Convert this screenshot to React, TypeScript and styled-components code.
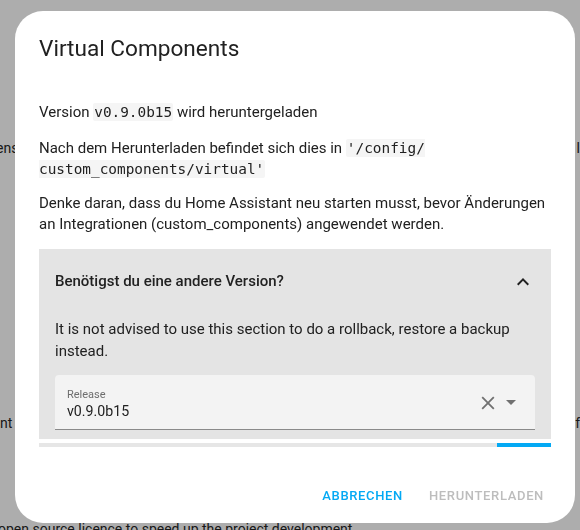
import React from "react";
import styled, { createGlobalStyle } from "styled-components";

const Global = createGlobalStyle`
  html, body { margin: 0; padding: 0; }
  body {
    width: 580px;
    height: 530px;
    overflow: hidden;
    background: #ffffff;
    font-family: Roboto, "Liberation Sans", sans-serif;
  }
`;

const Page = styled.div`
  width: 580px;
  height: 530px;
  overflow: hidden;
  color: #262626;
  font-size: 14px;
  line-height: 16px;
  display: flex;
  flex-direction: column;
`;

const BgRow = styled.div<{ $top: number; $shift?: number }>`
  display: flex;
  justify-content: space-between;
  margin-top: ${(p) => p.$top}px;
  margin-left: ${(p) => p.$shift ?? 0}px;
  white-space: nowrap;
`;

const BgLine = styled.div<{ $top: number }>`
  margin-top: ${(p) => p.$top}px;
  margin-left: -2px;
  white-space: nowrap;
`;

const Scrim = styled.div`
  position: fixed;
  inset: 0;
  background: rgba(0, 0, 0, 0.32);
  display: flex;
  align-items: flex-start;
  justify-content: flex-start;
  padding: 11px 0 0 15px;
`;

const Dialog = styled.div`
  width: 560px;
  height: 512px;
  background: #ffffff;
  border-radius: 28px;
  display: flex;
  flex-direction: column;
  overflow: hidden;
  color: #212121;
`;

const Title = styled.h2`
  margin: 0;
  padding: 24px 24px 0;
  height: 51px;
  box-sizing: border-box;
  font-size: 22.6px;
  line-height: 28px;
  font-weight: 400;
  color: #212121;
`;

const Content = styled.div`
  flex: 1;
  min-height: 0;
  overflow: hidden;
  padding: 40px 24px 0;
  font-size: 15px;
  line-height: 21px;
`;

const Para = styled.p`
  margin: 0 0 13px;
  &:first-child {
    margin-bottom: 15px;
  }
`;

const Code = styled.code`
  font-family: "DejaVu Sans Mono", "Liberation Mono", monospace;
  font-size: 14.4px;
  line-height: 20px;
  background: #f5f5f5;
  padding: 1px 1px;
  border-radius: 2px;
  color: #212121;
`;

const Panel = styled.div`
  margin-top: 14px;
  background: #e4e4e4;
`;

const PanelHeader = styled.div`
  height: 65px;
  display: flex;
  align-items: center;
  justify-content: space-between;
  padding: 0 16px;
  font-weight: 500;
  font-size: 15px;
`;

const PanelBody = styled.div`
  padding: 4px 16px 16px;
`;

const PanelText = styled.p`
  margin: 0 0 13px;
  line-height: 22px;
`;

const Select = styled.div`
  height: 55px;
  box-sizing: border-box;
  background: #f3f3f3;
  border-radius: 4px 4px 0 0;
  border-bottom: 1px solid #8a8a8a;
  display: flex;
  align-items: center;
`;

const SelectText = styled.div`
  flex: 1;
  padding: 3px 12px 0;
  display: flex;
  flex-direction: column;
  gap: 2px;
`;

const SelectLabel = styled.span`
  font-size: 11px;
  line-height: 13px;
  color: #6d6d6d;
`;

const SelectValue = styled.span`
  font-size: 14.2px;
  line-height: 17px;
  color: #212121;
`;

const SelectIcons = styled.div`
  display: flex;
  align-items: center;
  gap: 11px;
  padding: 1px 19px 0 0;
`;

const Progress = styled.div`
  margin: 4px 24px 0;
  height: 4px;
  background: #e6e6e6;
  display: flex;
`;

const ProgressBar = styled.div<{ $start: number }>`
  margin-left: ${(p) => p.$start}%;
  flex: 1;
  background: #03a9f4;
`;

const Actions = styled.div`
  height: 76px;
  box-sizing: border-box;
  display: flex;
  justify-content: flex-end;
  align-items: flex-start;
  gap: 10px;
  padding: 30px 23px 0 0;
`;

const Button = styled.button<{ $disabled?: boolean }>`
  height: 36px;
  padding: 0 8px;
  border: none;
  background: transparent;
  font-family: Roboto, "Liberation Sans", sans-serif;
  font-size: 13px;
  font-weight: 500;
  letter-spacing: 0.65px;
  text-transform: uppercase;
  color: ${(p) => (p.$disabled ? "#bdbdbd" : "#03a9f4")};
  cursor: pointer;
`;

const ChevronUp = () => (
  <svg width="24" height="24" viewBox="0 0 24 24" aria-hidden>
    <path d="M7.41,15.41L12,10.83L16.59,15.41L18,14L12,8L6,14L7.41,15.41Z" fill="#212121" />
  </svg>
);

const ClearIcon = () => (
  <svg width="14" height="14" viewBox="0 0 14 14" aria-hidden>
    <path d="M1.2 1.2 L12.8 12.8 M12.8 1.2 L1.2 12.8" stroke="#707070" strokeWidth="1.8" fill="none" />
  </svg>
);

const MenuDown = () => (
  <svg width="10" height="5" viewBox="0 0 10 5" aria-hidden>
    <path d="M0 0 L5 5 L10 0 Z" fill="#707070" />
  </svg>
);

export default function App() {
  return (
    <>
      <Global />
      <Page>
        <BgRow $top={140} $shift={-4}>
          <span>ens</span>
          <span>l</span>
        </BgRow>
        <BgRow $top={259}>
          <span>nt</span>
          <span>f</span>
        </BgRow>
        <BgLine $top={90}>open source licence to speed up the project development</BgLine>
      </Page>
      <Scrim>
        <Dialog role="dialog">
          <Title>Virtual Components</Title>
          <Content>
            <Para>
              Version <Code>v0.9.0b15</Code> wird heruntergeladen
            </Para>
            <Para>
              Nach dem Herunterladen befindet sich dies in <Code>'/config/ custom_components/virtual'</Code>
            </Para>
            <Para>
              Denke daran, dass du Home Assistant neu starten musst, bevor Änderungen an Integrationen
              (custom_components) angewendet werden.
            </Para>
            <Panel>
              <PanelHeader>
                <span>Benötigst du eine andere Version?</span>
                <ChevronUp />
              </PanelHeader>
              <PanelBody>
                <PanelText>
                  It is not advised to use this section to do a rollback, restore a backup instead.
                </PanelText>
                <Select>
                  <SelectText>
                    <SelectLabel>Release</SelectLabel>
                    <SelectValue>v0.9.0b15</SelectValue>
                  </SelectText>
                  <SelectIcons>
                    <ClearIcon />
                    <MenuDown />
                  </SelectIcons>
                </Select>
              </PanelBody>
            </Panel>
          </Content>
          <Progress>
            <ProgressBar $start={89.4} />
          </Progress>
          <Actions>
            <Button>Abbrechen</Button>
            <Button $disabled>Herunterladen</Button>
          </Actions>
        </Dialog>
      </Scrim>
    </>
  );
}
